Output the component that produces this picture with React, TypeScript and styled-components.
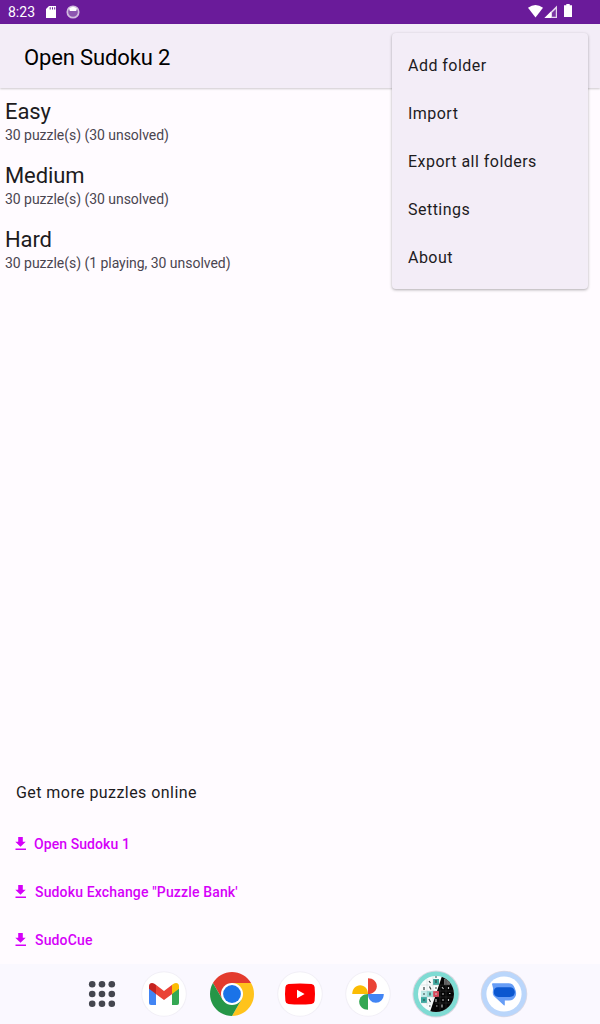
import React from "react";
import styled, { createGlobalStyle } from "styled-components";

const GlobalStyle = createGlobalStyle`
  * { box-sizing: border-box; }
  body { margin: 0; background: #fffbff; font-family: Roboto, "Liberation Sans", sans-serif; }
`;

const Screen = styled.div`
  position: relative;
  width: 600px;
  height: 1024px;
  display: flex;
  flex-direction: column;
  background: #fffbff;
  color: #1d1b1e;
  overflow: hidden;
`;

const StatusBar = styled.header`
  height: 24px;
  flex: none;
  display: flex;
  align-items: center;
  padding: 0 27px 0 8px;
  background: #6a1b9a;
  color: #fff;
`;

const Clock = styled.span`
  width: 37px;
  font-size: 14px;
  line-height: 25px;
`;

const StatusIcons = styled.svg`
  display: block;
  flex: none;
`;

const Spacer = styled.div`
  flex: 1;
`;

const AppBar = styled.div`
  height: 64px;
  flex: none;
  display: flex;
  align-items: center;
  padding: 4px 24px 0;
  background: #f3edf7;
  box-shadow: 0 1px 2px rgba(0, 0, 0, 0.2);
`;

const Title = styled.h1`
  margin: 0;
  font-size: 22px;
  line-height: 28px;
  font-weight: 400;
  letter-spacing: -0.13px;
  color: #000;
`;

const FolderList = styled.main`
  flex: 1;
  display: flex;
  flex-direction: column;
  padding: 10px 5px 0;
`;

const FolderRow = styled.div`
  height: 64px;
`;

const FolderName = styled.div`
  font-size: 22px;
  line-height: 28px;
  letter-spacing: -0.1px;
`;

const FolderDetail = styled.div`
  font-size: 14px;
  line-height: 18px;
  letter-spacing: -0.035px;
  color: #4a4550;
`;

const OnlineSection = styled.section`
  height: 184px;
  flex: none;
  padding-left: 15px;
`;

const SectionTitle = styled.div`
  height: 40px;
  padding-left: 1px;
  font-size: 16px;
  line-height: 25px;
  letter-spacing: 0.44px;
`;

const DownloadLink = styled.a<{ $gap: number; $tracking: number }>`
  height: 48px;
  display: flex;
  align-items: center;
  gap: ${(p) => p.$gap}px;
  font-size: 14px;
  font-weight: 500;
  letter-spacing: ${(p) => p.$tracking}px;
  color: #d500f9;
`;

const Dock = styled.nav`
  height: 60px;
  flex: none;
  display: flex;
  align-items: center;
  gap: 20px;
  padding-left: 88px;
  background: #faf8ff;
`;

const AppsButton = styled.svg`
  display: block;
  margin-right: 4px;
`;

const DockIcon = styled.svg`
  display: block;
  width: 48px;
  height: 48px;
`;

const Menu = styled.div`
  position: absolute;
  top: 33px;
  left: 392px;
  width: 196px;
  height: 256px;
  padding: 8px 0;
  border-radius: 4px;
  background: #f3edf7;
  box-shadow: 0 1px 3px rgba(0, 0, 0, 0.32);
`;

const MenuItem = styled.div`
  height: 48px;
  padding-left: 16px;
  font-size: 16px;
  line-height: 49px;
  letter-spacing: 0.47px;
`;

const folders = [
  { name: "Easy", detail: "30 puzzle(s) (30 unsolved)" },
  { name: "Medium", detail: "30 puzzle(s) (30 unsolved)" },
  { name: "Hard", detail: "30 puzzle(s) (1 playing, 30 unsolved)" },
];

const sources = [
  { label: "Open Sudoku 1", gap: 8, tracking: 0.08 },
  { label: "Sudoku Exchange \"Puzzle Bank'", gap: 9, tracking: 0.15 },
  { label: "SudoCue", gap: 9, tracking: 0.15 },
];

const menuItems = ["Add folder", "Import", "Export all folders", "Settings", "About"];

const DownloadIcon = () => (
  <svg width="11" height="16" viewBox="0 0 11 16" fill="currentColor">
    <path d="M3.2 1h4.6v4.7h2.9L5.5 10.800 0.3 5.700h2.9z" />
    <path d="M0.500 12.500h10.500v1.500H0.500z" />
  </svg>
);

const Disc = () => (
  <>
    <circle cx="24" cy="24" r="22.8" fill="#f1eff6" />
    <circle cx="24" cy="24" r="21.8" fill="#fff" />
  </>
);

const Gmail = () => (
  <DockIcon viewBox="0 0 48 48">
    <Disc />
    <path fill="#4285f4" d="M9 18l7 5v12h-5a2 2 0 0 1-2-2z" />
    <path fill="#34a853" d="M39 18l-7 5v12h5a2 2 0 0 0 2-2z" />
    <path fill="#ea4335" d="M15.500 14.600L24 21l8.500-6.400v9.100L24 30l-8.500-6.300z" />
    <path fill="#c5221f" d="M9 16c0-3 3.200-3.900 5.400-2.200l1.600 1.200v9L9 18.800z" />
    <path fill="#fbbc04" d="M39 16c0-3-3.200-3.900-5.400-2.200L32 15v9l7-5.200z" />
  </DockIcon>
);

const Chrome = () => (
  <DockIcon viewBox="0 0 48 48">
    <path fill="#e33b2e" d="M4.950 13A22 22 0 0 1 43.050 13H24L14.500 29.500z" />
    <path fill="#ffc31c" d="M43.050 13A22 22 0 0 1 24 46L33.500 29.500L24 13z" />
    <path fill="#259647" d="M24 46A22 22 0 0 1 4.950 13L14.500 29.500L33.500 29.500z" />
    <circle cx="24" cy="24" r="11" fill="#fff" />
    <circle cx="24" cy="24" r="8.9" fill="#1a73e8" />
  </DockIcon>
);

const YouTube = () => (
  <DockIcon viewBox="0 0 48 48">
    <Disc />
    <path
      fill="#f00"
      d="M12.500 14Q24 13 35.500 14Q38.300 14.300 38.600 17Q39.400 24 38.600 31Q38.300 33.700 35.500 34Q24 35 12.500 34Q9.700 33.700 9.400 31Q8.600 24 9.400 17Q9.700 14.300 12.500 14z"
    />
    <path fill="#fff" d="M21 19.700v8.600l7.600-4.300z" />
  </DockIcon>
);

const Photos = () => (
  <DockIcon viewBox="0 0 48 48">
    <Disc />
    <path fill="#ea4335" d="M24 8.200c5 0 8.800 3.500 8.800 8s-3.800 7.800-8.800 7.800z" />
    <path fill="#4285f4" d="M39.800 24c0 5-3.500 8.800-8 8.800s-7.800-3.800-7.800-8.800z" />
    <path fill="#34a853" d="M24 39.800c-5 0-8.800-3.500-8.800-8s3.800-7.800 8.800-7.800z" />
    <path fill="#fbbc04" d="M8.200 24c0-5 3.500-8.800 8-8.800s7.800 3.800 7.800 8.800z" />
  </DockIcon>
);

const boardCells = [
  [24, 12, "#3da79f"], [35, 12, "#6b6b6b"],
  [18, 24, "#8fdcd6"], [12, 24, "#c3ecea"], [24, 24, "#d5485a"],
  [12, 30, "#3aa79e"],
] as const;

const Sudoku = () => (
  <DockIcon viewBox="0 0 48 48">
    <defs>
      <clipPath id="board"><circle cx="24" cy="24" r="18" /></clipPath>
    </defs>
    <circle cx="24" cy="24" r="23.600" fill="#dcd8e2" />
    <circle cx="24" cy="24" r="22.600" fill="#7fdbd3" />
    <g clipPath="url(#board)">
      <path fill="#f9fcfc" d="M4 4h40v40H4z" />
      <path fill="#050505" d="M31 3L17 45h29V3z" />
      {boardCells.map(([x, y, fill], i) => (
        <rect key={i} x={x - 3} y={y - 3} width="6" height="6" fill={fill} />
      ))}
      <path stroke="#b9cccb" strokeWidth="0.400" fill="none" d="M15 9v27M21 6v25M9 15h18M9 21h15M9 27h13M9 33h12" />
      <path stroke="#393939" strokeWidth="0.500" fill="none" d="M34 7v33M28 15v25M28 15h14M26 21h16M25 27h17M23 33h18" />
      <g fill="none" strokeWidth="1.200">
        <path stroke="#344" d="M12 17v3M17 11l1.500 2M23 7h2M24 10v3M17.500 16.500l1.500 3M23 18h2M11 24h2M18 22.500v3M11 30h2M17 29l1.500 3M17 36h1.500" />
        <path stroke="#bdbdbd" d="M30 17l1.500 2M36.500 17v2M30 24h2M37 23.500h1.500M24 29v3M30 30h2M36.500 29v2M24 36h1.500M30 34.500v3M24 23v2" />
      </g>
    </g>
  </DockIcon>
);

const Messages = () => (
  <DockIcon viewBox="0 0 48 48">
    <circle cx="24" cy="24" r="23.300" fill="#dbd9e5" />
    <circle cx="24" cy="24" r="22.500" fill="#bad6fb" />
    <circle cx="24" cy="24" r="17.600" fill="#fff" />
    <path
      fill="#669df6"
      d="M12 14q0-.8 1-.8h15.500q4.500 0 6 4.300l1.300 3.500q.8 3-.3 5.300-1.900 4.200-6.500 4.200h-4.200v4.300q0 1.300-1 .4L13.800 26q-1.300-1.500-1-4.200l.3-3.300z"
    />
    <path fill="#0b57d0" d="M18 17.300h12q3.800 0 4.700 3.800 .7 5.800-5 5.800H18.500q-4.700 0-4.700-4.800t4.200-4.800z" />
  </DockIcon>
);

export default function App() {
  return (
    <>
      <GlobalStyle />
      <Screen>
        <StatusBar>
          <Clock>8:23</Clock>
          <StatusIcons width="36" height="24" viewBox="45 0 36 24">
            <path fill="#fff" d="M49 6h7v12H46V9z" />
            <path fill="#6a1b9a" d="M49.700 7.300h1v2.200h-1zM52 7.300h1v2.200h-1zM54.200 7.300h1v2.200h-1z" />
            <circle cx="73" cy="12" r="5.700" fill="#8d55b0" stroke="#d2bbdf" strokeWidth="1.700" />
            <path fill="#fff" d="M69 8.500q4-3.500 8 0l-.8 2.500h-6.400z" />
          </StatusIcons>
          <Spacer />
          <StatusIcons width="46" height="24" viewBox="527 0 46 24">
            <path fill="#fff" d="M528 7.800q7.500-5.500 15 0L535.500 17.500z" />
            <path fill="#e4d5ec" d="M557 5.500V18H544.500z" />
            <path fill="#fff" d="M551 11.500V18h-6.500z" />
            <path fill="#7b36a4" d="M555.800 9v7.700H552v-4z" />
            <path fill="#fff" d="M566.300 4h3.400v1.200h2.300V17h-8V5.200h2.300z" />
          </StatusIcons>
        </StatusBar>
        <AppBar>
          <Title>Open Sudoku 2</Title>
        </AppBar>
        <FolderList>
          {folders.map((f) => (
            <FolderRow key={f.name}>
              <FolderName>{f.name}</FolderName>
              <FolderDetail>{f.detail}</FolderDetail>
            </FolderRow>
          ))}
        </FolderList>
        <OnlineSection>
          <SectionTitle>Get more puzzles online</SectionTitle>
          {sources.map((s) => (
            <DownloadLink key={s.label} $gap={s.gap} $tracking={s.tracking}>
              <DownloadIcon />
              <span>{s.label}</span>
            </DownloadLink>
          ))}
        </OnlineSection>
        <Dock>
          <AppsButton width="28" height="28" viewBox="0 0 28 28" fill="#44464f">
            {[4.2, 14, 23.8].map((y) =>
              [4.2, 14, 23.8].map((x) => <circle key={`${x}-${y}`} cx={x} cy={y} r="3.300" />)
            )}
          </AppsButton>
          <Gmail />
          <Chrome />
          <YouTube />
          <Photos />
          <Sudoku />
          <Messages />
        </Dock>
        <Menu>
          {menuItems.map((m) => (
            <MenuItem key={m}>{m}</MenuItem>
          ))}
        </Menu>
      </Screen>
    </>
  );
}
